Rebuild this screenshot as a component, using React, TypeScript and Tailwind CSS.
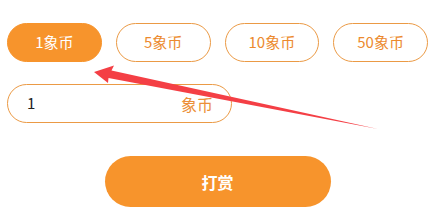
import { useState } from "react";

const amounts = [1, 5, 10, 50];

export default function App() {
  const [selected, setSelected] = useState(1);

  return (
    <div
      className="relative w-[440px] h-[220px] bg-white overflow-hidden"
      style={{ fontFamily: '"Noto Sans CJK SC", "Noto Sans", sans-serif' }}
    >
      <div className="flex flex-col pl-[7px] pr-[12px] pt-[23px]">
        {/* Amount options */}
        <div className="flex gap-[14px]">
          {amounts.map((a) => (
            <button
              key={a}
              onClick={() => setSelected(a)}
              className={
                a === selected
                  ? "w-[95px] h-[39px] rounded-full bg-[#f7942c] border border-[#f7942c] text-white text-[15px] flex items-center justify-center"
                  : "w-[95px] h-[39px] rounded-full bg-white border-[1.5px] border-[#eb9a45] text-[#ec8a2e] text-[15px] flex items-center justify-center"
              }
            >
              {a}象币
            </button>
          ))}
        </div>

        {/* Custom amount */}
        <div className="mt-[22px] w-[225px] h-[39px] rounded-full border-[1.5px] border-[#eb9a45] flex items-center pl-[19px] pr-[18px]">
          <span className="text-[15px] text-[#222] flex-1">1</span>
          <span className="text-[16px] text-[#ec8f38]">象币</span>
        </div>

        {/* Submit */}
        <div className="flex justify-center mt-[33px]">
          <button className="w-[226px] h-[51px] rounded-full bg-[#f7942c] text-white text-[16px] font-bold">
            打赏
          </button>
        </div>
      </div>

      {/* Annotation arrow */}
      <svg className="absolute inset-0 pointer-events-none" width="440" height="220" viewBox="0 0 440 220">
        <polygon
          points="94,72 114,65.5 111.5,70.5 378,129 108.5,78 108,83"
          fill="#f43f45"
        />
      </svg>
    </div>
  );
}
